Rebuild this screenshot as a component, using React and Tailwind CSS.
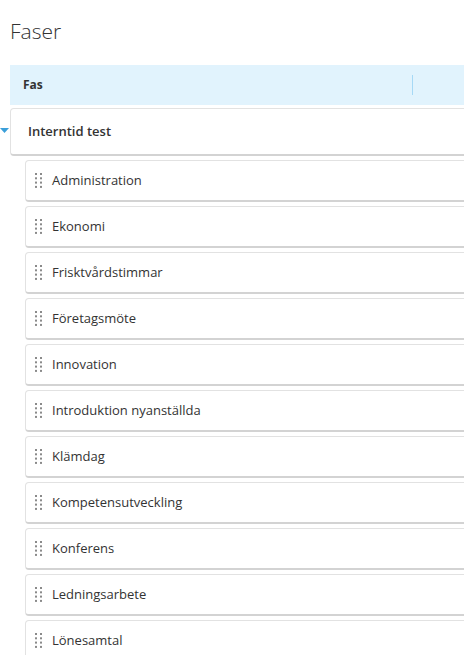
const phases = [
  "Administration",
  "Ekonomi",
  "Frisktvårdstimmar",
  "Företagsmöte",
  "Innovation",
  "Introduktion nyanställda",
  "Klämdag",
  "Kompetensutveckling",
  "Konferens",
  "Ledningsarbete",
  "Lönesamtal",
];

function DragHandle() {
  const dots = [];
  for (let r = 0; r < 4; r++) {
    for (let c = 0; c < 2; c++) {
      dots.push(<rect key={`${r}-${c}`} x={c * 5} y={r * 4.3} width="2" height="2" fill="#8a8a8a" />);
    }
  }
  return (
    <svg width="7" height="15" viewBox="0 0 7 15" className="shrink-0">
      {dots}
    </svg>
  );
}

export default function App() {
  return (
    <div
      className="w-[464px] h-[655px] overflow-hidden bg-white text-[#333]"
      style={{ fontFamily: '"Open Sans", "Liberation Sans", sans-serif' }}
    >
      <h1 className="pl-[10px] pt-[17px] text-[21px] font-light leading-[28px] text-[#333]">Faser</h1>

      <div className="w-[520px]">
        {/* table header */}
        <div className="ml-[10px] mt-[20px] flex h-[40px] items-center bg-[#e1f3fd]">
          <span className="w-[402px] pl-[13px] text-[12px] font-bold text-[#333]">Fas</span>
          <span className="h-[20px] w-px bg-[#a6d9f6]" />
        </div>

        {/* group row */}
        <div className="relative mt-[3px] ml-[10px]">
          <svg width="9" height="6" viewBox="0 0 9 6" className="absolute left-[-10px] top-[20px]">
            <path d="M0 0h9L4.5 5z" fill="#3b9fd9" />
          </svg>
          <div className="flex h-[48px] items-center rounded-[4px] border border-[#e2e2e2] border-b-2 border-b-[#d3d3d3] pl-[17px]">
            <span className="text-[13px] font-semibold">Interntid test</span>
          </div>
        </div>

        {/* phases */}
        <div className="ml-[25px] mt-[4px] flex flex-col gap-[4px]">
          {phases.map((p) => (
            <div
              key={p}
              className="flex h-[42px] items-center gap-[10px] rounded-[4px] border border-[#e2e2e2] border-b-2 border-b-[#d3d3d3] pl-[9px]"
            >
              <DragHandle />
              <span className="text-[13px]">{p}</span>
            </div>
          ))}
        </div>
      </div>
    </div>
  );
}
